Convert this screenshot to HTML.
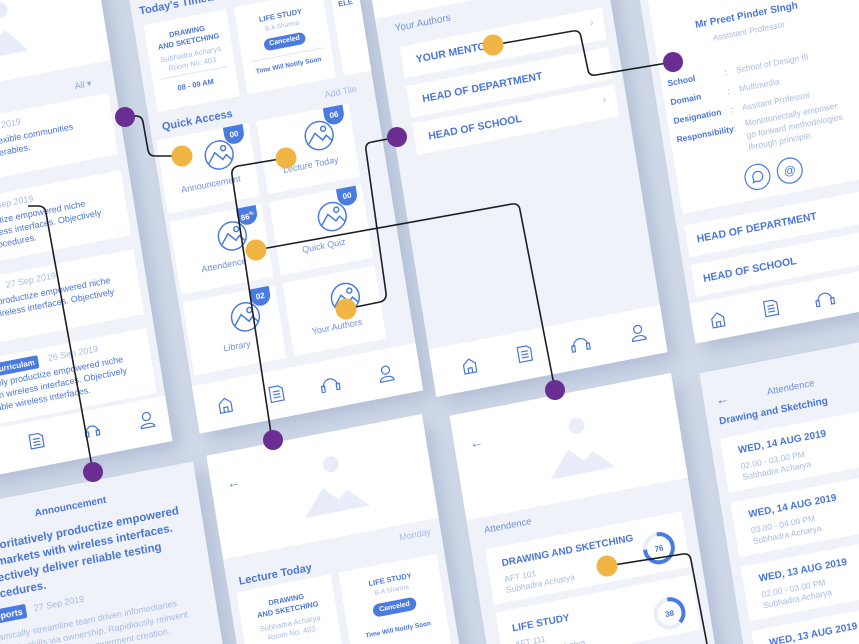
<!DOCTYPE html>
<html><head><meta charset="utf-8"><style>
*{margin:0;padding:0;box-sizing:border-box}
html,body{width:859px;height:644px;overflow:hidden;background:#d2dbe9;font-family:"Liberation Sans",sans-serif}
#clip{position:relative;width:859px;height:644px;overflow:hidden;background:#d2dbe9}
.w{position:absolute;left:0;top:0;width:1px;height:1px;transform-origin:0 0;transform:matrix(0.98,-0.19,0.16,0.987,0,0)}
.s{position:absolute;background:#eff2f9;box-shadow:8px 10px 18px rgba(120,140,180,.35);overflow:hidden}
.a{position:absolute}
.c{position:absolute;background:#fff}
.t{position:absolute;color:#4a76d6;font-weight:bold;white-space:nowrap}
.l{position:absolute;color:#a7bbe6;white-space:nowrap}
.nav{position:absolute;background:#fff;left:0;right:0}
.bd{position:absolute;background:#4a7be0;color:#fff;font-size:8px;font-weight:bold;width:20px;height:18px;border-radius:0 0 10px 10px;text-align:center;line-height:17px}
.pill{position:absolute;background:#4a7be0;color:#fff;font-size:7px;font-weight:bold;border-radius:8px;text-align:center}
svg.ic{position:absolute}
</style></head><body><div id="clip">
<div class="w">

<!-- Column A top -->
<div class="s" style="left:-140px;top:-200px;width:240px;height:666px">
  <div class="c" style="left:0;top:0;width:240px;height:280px"></div>
  <svg class="ic" style="left:110px;top:200px" width="60" height="60"><circle cx="28" cy="10" r="8" fill="#e8edf9"/><path d="M5 55 L30 30 L50 55Z" fill="#e8edf9"/></svg>
  <div class="l" style="left:200px;top:294px;font-size:9px;color:#8ea9e0">All &#9662;</div>
  <div class="c" style="left:10px;top:312px;width:222px;height:62px"></div>
  <div class="c" style="left:10px;top:390px;width:222px;height:66px"></div>
  <div class="c" style="left:10px;top:470px;width:222px;height:66px"></div>
  <div class="c" style="left:10px;top:550px;width:222px;height:66px"></div>
  <div class="l" style="left:90px;top:318px;font-size:9px">26 Sep 2019</div>
  <div class="t" style="left:60px;top:332px;font-size:9px;font-weight:normal;line-height:12px">Dynamically flexible communities<br>effective deliverables.</div>
  <div class="l" style="left:90px;top:396px;font-size:9px">26 Sep 2019</div>
  <div class="t" style="left:30px;top:410px;font-size:9px;font-weight:normal;line-height:12px">Objectively productize empowered niche<br>markets with wireless interfaces. Objectively<br>reliable testing procedures.</div>
  <div class="l" style="left:100px;top:476px;font-size:9px">27 Sep 2019</div>
  <div class="t" style="left:30px;top:490px;font-size:9px;font-weight:normal;line-height:12px">Authoritatively productize empowered niche<br>markets with wireless interfaces. Objectively<br>reliable.</div>
  <div class="pill" style="left:70px;top:556px;width:50px;height:13px;border-radius:2px;font-size:8px;line-height:13px">Curriculam</div>
  <div class="l" style="left:130px;top:556px;font-size:9px">26 Sep 2019</div>
  <div class="t" style="left:30px;top:570px;font-size:9px;font-weight:normal;line-height:12px">Authoritatively productize empowered niche<br>markets with wireless interfaces. Objectively<br>deliver reliable wireless interfaces.</div>
  <div class="nav" style="top:620px;height:46px"></div>
  <svg class="ic" style="left:96px;top:630px" width="20" height="20" fill="none" stroke="#4a76d6" stroke-width="1.2"><path d="M3 3h9l4 3v11H3z M6 8h7M6 11h7M6 14h7"/></svg>
  <svg class="ic" style="left:152px;top:630px" width="20" height="20" fill="none" stroke="#4a76d6" stroke-width="1.2"><path d="M4 12a6 6 0 0 1 12 0M3 11h3v5H3zM14 11h3v5h-3z"/></svg>
  <svg class="ic" style="left:208px;top:630px" width="20" height="20" fill="none" stroke="#4a76d6" stroke-width="1.2"><circle cx="10" cy="7" r="4"/><path d="M3 18c0-5 14-5 14 0z"/></svg>
</div>

<!-- Column A lower: Announcement -->
<div class="s" style="left:-140px;top:490px;width:257px;height:420px;background:#eff2f9">
  <div class="t" style="left:0;width:257px;text-align:center;top:16px;font-size:10px">Announcement</div>
  <div class="t" style="left:26px;top:38px;font-size:11.5px;line-height:16px">Authoritatively productize empowered<br>the markets with wireless interfaces.<br>Objectively deliver reliable testing<br>procedures.</div>
  <div class="pill" style="left:32px;top:108px;width:36px;height:14px;border-radius:2px;font-size:9px;line-height:14px">Sports</div>
  <div class="l" style="left:76px;top:109px;font-size:9px">27 Sep 2019</div>
  <div class="l" style="left:20px;top:130px;font-size:9px;line-height:13px">Dynamically streamline team driven infomediaries<br>leadership skills via ownership. Rapidiously reinvent<br>one-to-one methods of empowerment creation.</div>
</div>

<!-- Column B top -->
<div class="s" style="left:128px;top:-200px;width:228px;height:664px">
  <div class="t" style="left:8px;top:232px;font-size:11px">Today's Timetable</div>
  <div class="c" style="left:10px;top:252px;width:84px;height:88px"></div>
  <div class="t" style="left:10px;width:84px;text-align:center;top:262px;font-size:7.5px;line-height:10px">DRAWING<br>AND SKETCHING</div>
  <div class="l" style="left:10px;width:84px;text-align:center;top:285px;font-size:7.5px;line-height:10px">Subhadra Acharya<br>Room No: 403</div>
  <div class="a" style="left:18px;top:308px;width:68px;border-top:1px solid #dde4f3"></div>
  <div class="t" style="left:10px;width:84px;text-align:center;top:316px;font-size:7.5px">08 - 09 AM</div>
  <div class="c" style="left:102px;top:252px;width:90px;height:88px"></div>
  <div class="t" style="left:102px;width:90px;text-align:center;top:264px;font-size:7.5px">LIFE STUDY</div>
  <div class="l" style="left:102px;width:90px;text-align:center;top:276px;font-size:6.5px">B.A Sharma</div>
  <div class="pill" style="left:126px;top:289px;width:42px;height:12px;line-height:12px">Canceled</div>
  <div class="a" style="left:110px;top:308px;width:74px;border-top:1px solid #dde4f3"></div>
  <div class="t" style="left:102px;width:90px;text-align:center;top:316px;font-size:6.5px">Time Will Notify Soon</div>
  <div class="c" style="left:200px;top:252px;width:40px;height:88px"></div>
  <div class="t" style="left:206px;top:264px;font-size:7.5px">ELE</div>
  <div class="l" style="left:178px;top:350px;font-size:9px">Add Tile</div>
  <div class="t" style="left:12px;top:350px;font-size:11px">Quick Access</div>
</div>
<div class="a" style="left:120px;top:8px">
  <div class="c" style="left:12px;top:160px;width:94px;height:74px"></div>
  <div class="c" style="left:114px;top:160px;width:94px;height:74px"></div>
  <div class="c" style="left:12px;top:242px;width:94px;height:74px"></div>
  <div class="c" style="left:114px;top:242px;width:94px;height:74px"></div>
  <div class="c" style="left:12px;top:324px;width:94px;height:74px"></div>
  <div class="c" style="left:114px;top:324px;width:94px;height:74px"></div>
  <div class="bd" style="left:80px;top:160px">00</div>
  <div class="bd" style="left:182px;top:160px">06</div>
  <div class="bd" style="left:80px;top:242px">86<sup style="font-size:5px">%</sup></div>
  <div class="bd" style="left:182px;top:242px">00</div>
  <div class="bd" style="left:80px;top:324px">02</div>
</div>
<svg class="ic" style="left:0;top:0;overflow:visible" width="1" height="1">
 <defs><g id="im" fill="none" stroke="#4a7be0" stroke-width="1.5"><circle cx="0" cy="0" r="14"/><path d="M-12 7 L-4 -3 L3 5 L7 1 L12 7"/><circle cx="5" cy="-6" r="2.5"/></g></defs>
 <use href="#im" x="192" y="194"/><use href="#im" x="294" y="194"/>
 <use href="#im" x="192" y="276"/><use href="#im" x="294" y="276"/>
 <use href="#im" x="192" y="358"/><use href="#im" x="294" y="358"/>
</svg>
<div class="l" style="left:132px;width:94px;text-align:center;top:216px;font-size:9px;color:#6f92de">Announcement</div>
<div class="l" style="left:234px;width:94px;text-align:center;top:216px;font-size:9px;color:#6f92de">Lecture Today</div>
<div class="l" style="left:132px;width:94px;text-align:center;top:298px;font-size:9px;color:#6f92de">Attendence</div>
<div class="l" style="left:234px;width:94px;text-align:center;top:298px;font-size:9px;color:#6f92de">Quick Quiz</div>
<div class="l" style="left:132px;width:94px;text-align:center;top:380px;font-size:9px;color:#6f92de">Library</div>
<div class="l" style="left:234px;width:94px;text-align:center;top:380px;font-size:9px;color:#6f92de">Your Authors</div>
<div class="c" style="left:128px;top:416px;width:228px;height:48px"></div>
<svg class="ic" style="left:140px;top:428px" width="220" height="24" fill="none" stroke="#4a76d6" stroke-width="1.2">
 <path d="M12 20V11l6-5 6 5v9zM16 20v-5h4v5"/>
 <path d="M64 4h9l4 3v12H64zM67 9h7M67 12h7M67 15h7"/>
 <path d="M118 14a7 7 0 0 1 14 0M116 13h3v6h-3zM131 13h3v6h-3z"/>
 <circle cx="182" cy="9" r="4"/><path d="M175 20c0-6 14-6 14 0z"/>
</svg>

<!-- Column B lower: Lecture Today -->
<div class="s" style="left:131px;top:487px;width:220px;height:420px">
  <div class="c" style="left:0;top:0;width:220px;height:105px"></div>
  <div class="t" style="left:16px;top:24px;font-size:13px">&#8592;</div>
  <svg class="ic" style="left:80px;top:20px" width="80" height="70"><circle cx="42" cy="12" r="8" fill="#e8edf9"/><path d="M8 60 L30 34 L44 48 L54 40 L74 60Z" fill="#e8edf9"/></svg>
  <div class="l" style="right:10px;top:112px;font-size:9px">Monday</div>
  <div class="t" style="left:12px;top:124px;font-size:11px">Lecture Today</div>
  <div class="c" style="left:8px;top:140px;width:96px;height:100px"></div>
  <div class="t" style="left:8px;width:96px;text-align:center;top:152px;font-size:7.5px;line-height:10px">DRAWING<br>AND SKETCHING</div>
  <div class="l" style="left:8px;width:96px;text-align:center;top:176px;font-size:7.5px;line-height:10px">Subhadra Acharya<br>Room No: 403</div>
  <div class="c" style="left:112px;top:140px;width:100px;height:100px"></div>
  <div class="t" style="left:112px;width:100px;text-align:center;top:152px;font-size:7.5px">LIFE STUDY</div>
  <div class="l" style="left:112px;width:100px;text-align:center;top:164px;font-size:6.5px">B.A Sharma</div>
  <div class="pill" style="left:140px;top:178px;width:44px;height:13px;line-height:13px">Canceled</div>
  <div class="t" style="left:112px;width:100px;text-align:center;top:204px;font-size:6.5px">Time Will Notify Soon</div>
</div>

<!-- Column C top: Your Authors -->
<div class="s" style="left:368px;top:-200px;width:236px;height:673px">
  <div class="c" style="left:0;top:0;width:236px;height:290px"></div>
  <div class="t" style="left:18px;top:298px;font-size:10px;font-weight:normal;color:#6f92de">Your Authors</div>
  <div class="c" style="left:20px;top:322px;width:206px;height:32px"></div>
  <div class="c" style="left:20px;top:362px;width:206px;height:32px"></div>
  <div class="c" style="left:20px;top:400px;width:206px;height:32px"></div>
  <div class="t" style="left:34px;top:332px;font-size:10.5px">YOUR MENTOR</div>
  <div class="t" style="left:34px;top:372px;font-size:10.5px">HEAD OF DEPARTMENT</div>
  <div class="t" style="left:34px;top:410px;font-size:10.5px">HEAD OF SCHOOL</div>
  <div class="l" style="left:212px;top:330px;font-size:10px">&#8250;</div>
  <div class="l" style="left:212px;top:408px;font-size:10px">&#8250;</div>
  <div class="nav" style="top:625px;height:48px"></div>
  <svg class="ic" style="left:20px;top:636px" width="220" height="24" fill="none" stroke="#4a76d6" stroke-width="1.2">
   <path d="M12 20V11l6-5 6 5v9zM16 20v-5h4v5"/>
   <path d="M68 4h9l4 3v12H68zM71 9h7M71 12h7M71 15h7"/>
   <path d="M124 14a7 7 0 0 1 14 0M122 13h3v6h-3zM137 13h3v6h-3z"/>
   <circle cx="190" cy="9" r="4"/><path d="M183 20c0-6 14-6 14 0z"/>
  </svg>
</div>

<!-- Column C lower: Attendence detail -->
<div class="s" style="left:378px;top:494px;width:226px;height:420px">
  <div class="c" style="left:0;top:0;width:226px;height:106px"></div>
  <div class="t" style="left:16px;top:24px;font-size:13px">&#8592;</div>
  <svg class="ic" style="left:82px;top:22px" width="80" height="70"><circle cx="42" cy="12" r="8" fill="#e8edf9"/><path d="M8 60 L30 34 L44 48 L54 40 L74 60Z" fill="#e8edf9"/></svg>
  <div class="t" style="left:16px;top:114px;font-size:9.5px;font-weight:normal;color:#6f92de">Attendence</div>
  <div class="c" style="left:14px;top:138px;width:200px;height:56px"></div>
  <div class="c" style="left:14px;top:202px;width:200px;height:56px"></div>
  <div class="t" style="left:28px;top:150px;font-size:10px">DRAWING AND SKETCHING</div>
  <div class="l" style="left:28px;top:166px;font-size:8.5px;line-height:11px">AFT 101<br>Subhadra Acharya</div>
  <div class="t" style="left:28px;top:216px;font-size:10px">LIFE STUDY</div>
  <div class="l" style="left:28px;top:232px;font-size:8.5px;line-height:11px">AFT 111<br>Subhadra Acharya</div>
  <svg class="ic" style="left:168px;top:152px" width="36" height="100" fill="none" stroke-width="4">
   <circle cx="18" cy="18" r="14" stroke="#e8eefa"/><circle cx="18" cy="18" r="14" stroke="#4a7be0" stroke-dasharray="67 88" transform="rotate(-90 18 18)"/>
   <circle cx="18" cy="84" r="14" stroke="#e8eefa"/><circle cx="18" cy="84" r="14" stroke="#4a7be0" stroke-dasharray="34 88" transform="rotate(-90 18 84)"/>
   <text x="18" y="21" font-size="8" font-weight="bold" fill="#4a76d6" stroke="none" text-anchor="middle" font-family="Liberation Sans">76</text>
   <text x="18" y="87" font-size="8" font-weight="bold" fill="#4a76d6" stroke="none" text-anchor="middle" font-family="Liberation Sans">38</text>
  </svg>
</div>

<!-- Column D top: profile -->
<div class="s" style="left:633px;top:-200px;width:240px;height:670px">
  <div class="c" style="left:8px;top:300px;width:224px;height:240px"></div>
  <div class="t" style="left:8px;width:190px;text-align:center;top:352px;font-size:10px">Mr Preet Pinder SIngh</div>
  <div class="l" style="left:8px;width:190px;text-align:center;top:368px;font-size:8.5px">Assistant Professor</div>
  <div class="t" style="left:14px;top:400px;font-size:8.5px;line-height:19px">School<br>Domain<br>Designation<br>Responsibility</div>
  <div class="l" style="left:72px;top:400px;font-size:8.5px;line-height:19px;color:#6f92de">:<br>:<br>:<br>:</div>
  <div class="l" style="left:84px;top:400px;font-size:8.5px;line-height:19px">School of Design III<br>Multimedia<br>Assitant Professor</div>
  <div class="l" style="left:84px;top:457px;font-size:8.5px;line-height:12px">Monotonectally empower<br>go forward methodologies<br>through principle.</div>
  <svg class="ic" style="left:74px;top:503px" width="70" height="30" fill="none" stroke="#4a7be0" stroke-width="1.2">
   <circle cx="14" cy="15" r="12.5"/><circle cx="47" cy="15" r="12.5"/>
   <path d="M9 20l1-3a5 5 0 1 1 2 2z"/>
   <text x="47" y="19" font-size="12" fill="#4a7be0" stroke="none" text-anchor="middle" font-family="Liberation Sans">@</text>
  </svg>
  <div class="c" style="left:8px;top:552px;width:224px;height:32px"></div>
  <div class="c" style="left:8px;top:592px;width:224px;height:32px"></div>
  <div class="t" style="left:18px;top:562px;font-size:10.5px">HEAD OF DEPARTMENT</div>
  <div class="t" style="left:18px;top:602px;font-size:10.5px">HEAD OF SCHOOL</div>
  <div class="nav" style="top:630px;height:40px"></div>
  <svg class="ic" style="left:16px;top:638px" width="220" height="24" fill="none" stroke="#4a76d6" stroke-width="1.2">
   <path d="M4 20V11l6-5 6 5v9zM8 20v-5h4v5"/>
   <path d="M58 4h9l4 3v12H58zM61 9h7M61 12h7M61 15h7"/>
   <path d="M112 14a7 7 0 0 1 14 0M110 13h3v6h-3zM125 13h3v6h-3z"/>
  </svg>
</div>

<!-- Column D lower: Attendence list -->
<div class="s" style="left:632px;top:500px;width:240px;height:420px">
  <div class="t" style="left:64px;top:26px;font-size:9.5px;font-weight:normal;color:#6f92de">Attendence</div>
  <div class="t" style="left:12px;top:22px;font-size:13px">&#8592;</div>
  <div class="t" style="left:12px;top:46px;font-size:10px">Drawing and Sketching</div>
  <div class="c" style="left:10px;top:68px;width:230px;height:55px"></div>
  <div class="c" style="left:10px;top:133px;width:230px;height:55px"></div>
  <div class="c" style="left:10px;top:198px;width:230px;height:55px"></div>
  <div class="c" style="left:10px;top:263px;width:230px;height:55px"></div>
  <div class="t" style="left:26px;top:78px;font-size:10px">WED, 14 AUG 2019</div>
  <div class="l" style="left:26px;top:94px;font-size:8.5px;line-height:11px">02.00 - 03.00 PM<br>Subhadra Acharya</div>
  <div class="t" style="left:26px;top:143px;font-size:10px">WED, 14 AUG 2019</div>
  <div class="l" style="left:26px;top:159px;font-size:8.5px;line-height:11px">03.00 - 04.00 PM<br>Subhadra Acharya</div>
  <div class="t" style="left:26px;top:208px;font-size:10px">WED, 13 AUG 2019</div>
  <div class="l" style="left:26px;top:224px;font-size:8.5px;line-height:11px">02.00 - 03.00 PM<br>Subhadra Acharya</div>
  <div class="t" style="left:26px;top:273px;font-size:10px">WED, 13 AUG 2019</div>
</div>

</div>

<svg style="position:absolute;left:0;top:0" width="859" height="644" fill="none" stroke="#1d1d24" stroke-width="1.6" stroke-linejoin="round">
 <path d="M123 117 L136 116 Q142 116 143 122 L148 150 Q149 156 155 156 L182 156"/>
 <path d="M286 158 L238 166 Q231 168 232 175 L272 440"/>
 <path d="M256 250 L512 204 Q519 203 520 210 L555 390"/>
 <path d="M346 309 L380 302 Q387 300 386 293 L366 150 Q365 143 372 142 L398 137"/>
 <path d="M493 45 L573 31 Q580 30 581 37 L588 70 Q589 76 596 75 L673 62"/>
 <path d="M28 206 L38 206 Q45 206 46 213 L93 472"/>
 <path d="M607 566 L683 554 Q690 553 691 560 L707 644"/>
 <g stroke="none">
  <circle cx="182" cy="156" r="10.5" fill="#f1b544"/><circle cx="286" cy="158" r="10.5" fill="#f1b544"/>
  <circle cx="256" cy="250" r="10.5" fill="#f1b544"/><circle cx="346" cy="309" r="10.5" fill="#f1b544"/>
  <circle cx="493" cy="45" r="10.5" fill="#f1b544"/><circle cx="607" cy="566" r="10.5" fill="#f1b544"/>
  <circle cx="125" cy="117" r="10" fill="#6a2e92"/><circle cx="273" cy="440" r="10" fill="#6a2e92"/>
  <circle cx="555" cy="390" r="10" fill="#6a2e92"/><circle cx="397" cy="137" r="10" fill="#6a2e92"/>
  <circle cx="673" cy="62" r="10" fill="#6a2e92"/><circle cx="93" cy="472" r="10" fill="#6a2e92"/>
 </g>
</svg>
</div></body></html>
